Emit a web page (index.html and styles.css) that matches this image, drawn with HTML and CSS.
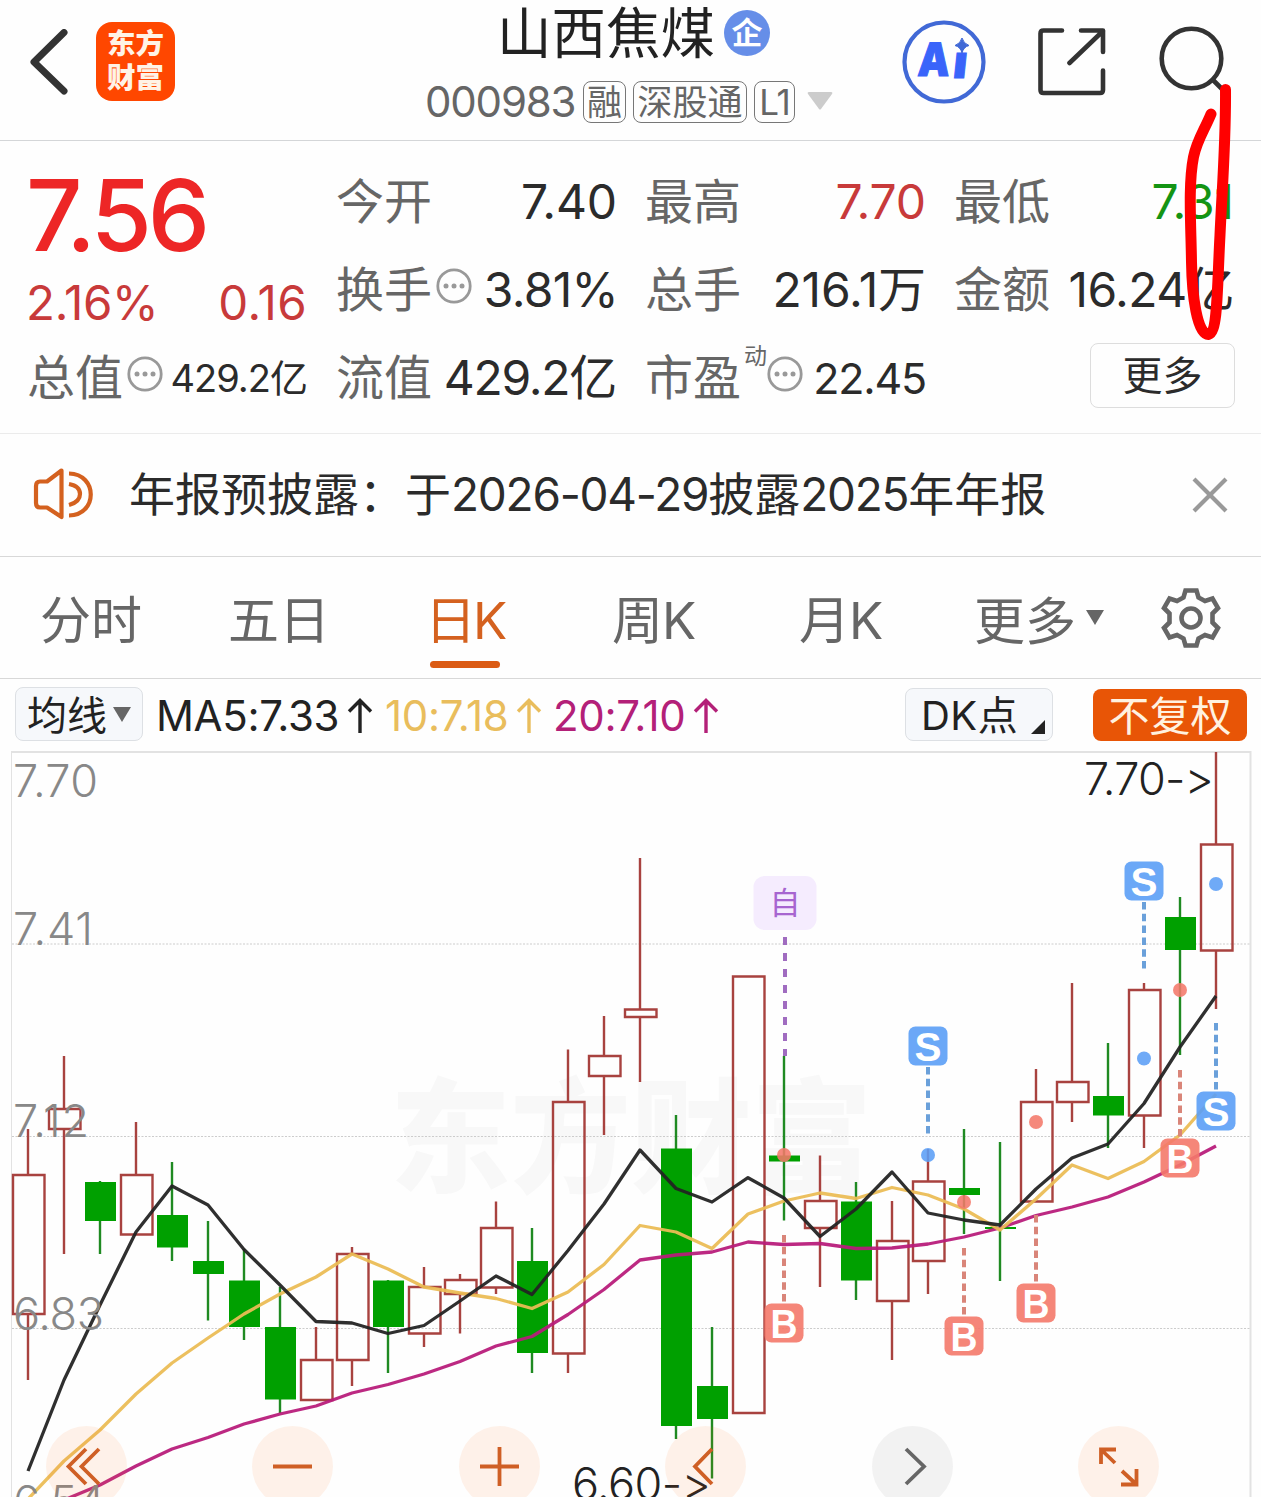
FILE: index.html
```html
<!DOCTYPE html>
<html lang="zh-CN">
<head>
<meta charset="utf-8">
<title>山西焦煤 000983</title>
<link rel="stylesheet" href="styles.css">
</head>
<body>
<div class="page">
  <header class="topbar">
    <div class="topbar-left">
      <svg class="back" width="38" height="66" viewBox="0 0 38 66"><path d="M34 3.500L4 33L34 62" fill="none" stroke="#333" stroke-width="7" stroke-linejoin="round" stroke-linecap="round"/></svg>
      <div class="logo"><span>东方</span><span>财富</span></div>
    </div>
    <div class="topbar-title">
      <div class="name-row"><span class="name">山西焦煤</span><span class="corp">企</span></div>
      <div class="code-row">
        <span class="code">000983</span><span class="tag tag-a">融</span><span class="tag tag-b">深股通</span><span class="tag tag-c">L1</span>
        <svg class="code-caret" width="26" height="18" viewBox="0 0 26 18"><path d="M2 0H24Q26 0 25 2L14 17Q13 18 12 17L1 2Q0 0 2 0Z" fill="#ccc"/></svg>
      </div>
    </div>
    <div class="topbar-actions">
      <svg width="84" height="84" viewBox="0 0 84 84"><circle cx="42" cy="42" r="39.500" fill="none" stroke="#4169d6" stroke-width="4.200"/>
        <g class="ai"><text transform="translate(15 56) skewX(-4)" textLength="32" lengthAdjust="spacingAndGlyphs">A</text><text transform="translate(50 58) skewX(-6)" textLength="14" lengthAdjust="spacingAndGlyphs">ı</text></g>
        <path d="M60 18Q61.500 23.500 67 25.500Q61.500 27 60 33Q58.500 27 53 25.500Q58.500 23.500 60 18Z" fill="#4169d6" stroke="#4169d6"/></svg>
      <svg width="70" height="70" viewBox="1036 27 70 70" fill="none" stroke="#333" stroke-width="4.600" stroke-linecap="round" stroke-linejoin="round"><path d="M1062 30.500H1043.500Q1040.500 30.500 1040.500 33.500V90Q1040.500 93 1043.500 93H1100Q1103 93 1103 90V70.500M1081 30.500H1103V52M1103 31L1069.500 63"/></svg>
      <svg width="72" height="72" viewBox="1157 25 72 72" fill="none" stroke="#333" stroke-width="4.600" stroke-linecap="round"><circle cx="1191.500" cy="58.500" r="29.800"/><path d="M1213 80L1226 93"/></svg>
    </div>
  </header>

  <section class="quote">
    <div class="price-block">
      <div class="price">7.56</div>
      <div class="change"><span class="pct">2.16%</span><span class="diff">0.16</span></div>
    </div>
    <div class="cell"><span class="label">今开</span><span class="val">7.40</span></div>
    <div class="cell"><span class="label">最高</span><span class="val up">7.70</span></div>
    <div class="cell"><span class="label">最低</span><span class="val down">7.31</span></div>
    <div class="cell"><span class="label">换手</span><svg class="info"><use href="#info"/></svg><span class="val rate">3.81%</span></div>
    <div class="cell"><span class="label">总手</span><span class="val">216.1万</span></div>
    <div class="cell"><span class="label">金额</span><span class="val amount">16.24亿</span></div>
    <div class="cell"><span class="label">总值</span><svg class="info"><use href="#info"/></svg><span class="val small">429.2亿</span></div>
    <div class="cell"><span class="label">流值</span><span class="val tight">429.2亿</span></div>
    <div class="cell"><span class="label">市盈</span><sup class="dyn">动</sup><svg class="info"><use href="#info"/></svg><span class="val pe">22.45</span></div>
    <div class="cell more-cell"><button class="more">更多</button></div>
  </section>

  <section class="notice">
    <svg class="horn" width="62" height="54" viewBox="32 467 62 54" fill="none" stroke="#d4611f" stroke-width="4.200" stroke-linejoin="round"><path d="M61.500 470.500L47 481.500H40Q36 481.500 36 486V503Q36 507.500 40 507.500H47L61.500 517Z"/><path d="M69 484Q80 486 80 494T69 505M69 473.500C98 474 98 515 69 515.500"/></svg>
    <span class="notice-text">年报预披露：于<span class="nd">2026-04-29</span>披露<span class="ny">2025</span>年年报</span>
    <svg class="close" width="36" height="36" viewBox="0 0 36 36"><path d="M2 2L34 34M34 2L2 34" stroke="#999" stroke-width="4.200"/></svg>
  </section>

  <nav class="tabs">
    <span class="tab">分时</span><span class="tab">五日</span><span class="tab active">日K</span><span class="tab">周K</span><span class="tab">月K</span><span class="tab tab-more">更多<svg width="18" height="15" viewBox="0 0 18 15"><path d="M0 0H18L9 15Z" fill="#666"/></svg></span>
    <svg class="gear" width="62" height="62" viewBox="-31 -31 62 62" fill="none" stroke="#666" stroke-width="4.600"><path d="M-5.500 -27.500H5.500L7.500 -20.500L14 -17L21.500 -19.500L27 -10L21.500 -4.500V4.500L27 10L21.500 19.500L14 17L7.500 20.500L5.500 27.500H-5.500L-7.500 20.500L-14 17L-21.500 19.500L-27 10L-21.500 4.500V-4.500L-27 -10L-21.500 -19.500L-14 -17L-7.500 -20.500Z"/><circle r="9.500"/></svg>
  </nav>

  <section class="indicators">
    <button class="chip chip-ma">均线<svg width="18" height="15" viewBox="0 0 18 15"><path d="M0 0H18L9 15Z" fill="#666"/></svg></button>
    <span class="ma ma5">MA5:7.33<svg class="arrow"><use href="#up"/></svg></span>
    <span class="ma ma10">10:7.18<svg class="arrow"><use href="#up"/></svg></span>
    <span class="ma ma20">20:7.10<svg class="arrow"><use href="#up"/></svg></span>
    <button class="chip chip-dk">DK点<svg width="14" height="14" viewBox="0 0 14 14"><path d="M14 0V14H0Z" fill="#222"/></svg></button>
    <button class="chip chip-adj">不复权</button>
  </section>

  <svg class="chart" width="1261" height="746" viewBox="0 751 1261 746">
    <text class="watermark" x="390" y="1183" textLength="482" lengthAdjust="spacingAndGlyphs">东方财富</text>
    <path d="M11 752H1250.500V1500" fill="none" stroke="#e2e2e2" stroke-width="2"/>
    <path d="M11.500 752V1500" stroke="#e2e2e2"/>
    <path d="M12 944H1250M12 1136.500H1250M12 1328.500H1250" stroke="#ccc" stroke-dasharray="2 1.500"/>
    <g id="candles"></g>
    <g id="averages"></g>
    <g class="axis">
      <text x="13" y="797" textLength="85">7.70</text>
      <text x="13" y="945" textLength="80">7.41</text>
      <text x="13" y="1137" textLength="76">7.12</text>
      <text x="13" y="1330" textLength="91">6.83</text>
      <text x="13" y="1518" textLength="92">6.54</text>
    </g>
    <g id="marks"></g>
    <g class="extreme">
      <text x="1084" y="795" textLength="130">7.70-&gt;</text>
      <text x="572" y="1500" textLength="139">6.60-&gt;</text>
    </g>
    <g class="controls">
      <circle cx="86.500" cy="1466.500" r="40.500"/><circle cx="292.500" cy="1466.500" r="40.500"/><circle cx="499.500" cy="1466.500" r="40.500"/><circle cx="705.500" cy="1466.500" r="40.500"/><circle class="off" cx="912.500" cy="1466.500" r="40.500"/><circle cx="1118.500" cy="1466.500" r="40.500"/>
      <path d="M86 1449L68.500 1466.500L86 1484M99 1449L81.500 1466.500L99 1484M273 1466.500H312M480 1466.500H519M499.500 1447V1486M712 1449L695 1466.500L712 1484"/>
      <path d="M1116 1449.500H1101V1464M1101.500 1450L1115 1463M1136.500 1469V1484.500H1121M1136 1484L1122 1471"/>
      <path class="off" d="M906 1449L924 1466.500L906 1484"/>
    </g>
  </svg>

  <svg class="scribble" width="60" height="270" viewBox="1180 80 60 270"><path d="M1225.500 89.500C1226 140 1222 190 1220 235C1217 290 1218 332 1208.500 334.500C1197 335 1192 295 1191.500 262C1191 225 1188 185 1193.500 157C1197 140 1204 131 1211 114" fill="none" stroke="#f00" stroke-width="11" stroke-linecap="round" stroke-linejoin="round"/></svg>

  <svg class="defs" width="0" height="0">
    <symbol id="info" viewBox="0 0 36 36"><circle cx="18" cy="18" r="16.200" fill="none" stroke="#999" stroke-width="2.800"/><g fill="#999"><circle cx="10" cy="18" r="2.500"/><circle cx="18" cy="18" r="2.500"/><circle cx="26" cy="18" r="2.500"/></g></symbol>
    <symbol id="up" viewBox="0 0 26 36"><path d="M13 35V2.500M2 13.500L13 2.500L24 13.500" fill="none" stroke="currentColor" stroke-width="3.400"/></symbol>
  </svg>
</div>
<script src="chart.js"></script>
</body>
</html>
```
FILE: styles.css
```css
* { box-sizing: border-box; }
body { margin: 0; background: #fefefe; }
.page {
  position: relative;
  width: 1261px;
  height: 1497px;
  overflow: hidden;
  background: #fefefe;
  color: #2b2b2b;
  font-family: Inter, "Noto Sans CJK SC", sans-serif;
  font-weight: 385;
  font-feature-settings: "calt" 0;
}
svg { display: block; flex: none; }
.defs { position: absolute; }
button { font: inherit; color: inherit; padding: 0; margin: 0; }
span { white-space: nowrap; }

.topbar { display: grid; grid-template-columns: 425px 408px 1fr; height: 141px; border-bottom: 1px solid #d4d6d8; }
.topbar-left { display: flex; padding: 22px 0 0 30px; }
.back { margin-top: 7px; }
.logo { width: 79px; height: 79px; margin-left: 28px; padding: 5px 0 0; border-radius: 16px; background: #ff4700; color: #fff3e6; display: flex; flex-direction: column; align-items: center; font-size: 28.500px; line-height: 34px; font-weight: 900; }
.name-row { display: flex; align-items: center; height: 66px; padding-left: 72px; }
.name { font-size: 54.500px; line-height: 68px; color: #222; }
.corp { width: 46px; height: 46px; margin-left: 9px; border-radius: 50%; background: #668ee8; color: #fff; font-size: 31px; line-height: 45px; text-align: center; font-weight: 700; }
.code-row { display: flex; align-items: center; height: 42px; margin-top: 15px; color: #666; }
.code { width: 158px; font-size: 42px; letter-spacing: -1.200px; margin-top: -2px; }
.tag { height: 42px; border: 1.500px solid #777; border-radius: 8px; font-size: 35px; line-height: 40px; text-align: center; margin-right: 7px; }
.tag-a { width: 43px; }
.tag-b { width: 114px; }
.tag-c { width: 41px; letter-spacing: -1px; }
.code-caret { margin: -3px 0 0 5px; }
.topbar-actions { display: flex; align-items: flex-start; padding: 20px 0 0 69px; }
.topbar-actions svg:nth-child(2) { margin: 7px 0 0 50px; }
.topbar-actions svg:nth-child(3) { margin: 5px 0 0 51px; }
.ai { font-size: 46px; font-weight: 900; fill: #3964fa; stroke: #3964fa; stroke-width: 1px; }

.quote { display: grid; grid-template-columns: 279px 279px 279px 278px; grid-template-rows: 88px 88px 88px; column-gap: 30px; height: 293px; padding: 17px 0 0 28px; border-bottom: 1px solid #ebebeb; }
.price-block { grid-row: span 2; color: #c83a3a; }
.price { color: #ed2626; font-size: 99px; line-height: 114px; font-weight: 530; letter-spacing: -4.200px; margin-left: -2px; }
.change { display: flex; justify-content: space-between; font-size: 47.500px; line-height: 62px; letter-spacing: -.300px; margin-left: -2px; }
.diff { letter-spacing: .400px; }
.cell { display: flex; align-items: center; font-size: 48px; line-height: 88px; }
.label { color: #666; margin-left: -1px; }
.val { margin-left: auto; letter-spacing: -.100px; margin-right: -1px; }
.up { color: #c83a3a; }
.down { color: #149414; }
.rate { letter-spacing: -.700px; margin-right: -2px; }
.amount { letter-spacing: -.600px; }
.tight { letter-spacing: -1.300px; margin-right: 0; }
.small { font-size: 38px; letter-spacing: -1px; margin-right: 0; }
.pe { font-size: 43px; letter-spacing: -1.200px; margin-right: -1px; }
.info { width: 36px; height: 36px; margin: -8px 0 0 4px; }
.dyn { font-size: 23px; line-height: 24px; color: #666; margin: -44px -4px 0 3px; }
.more-cell { justify-content: flex-end; }
.more { width: 145px; height: 65px; margin: -5px -2px 0 0; border: 1.500px solid #ddd; border-radius: 8px; background: transparent; font-size: 40px; line-height: 60px; }

.notice { display: flex; align-items: center; height: 123px; padding: 0 33px 0 32px; border-bottom: 1px solid #d8d8d8; }
.horn { margin-top: -3px; }
.notice-text { margin-left: 35px; font-size: 46px; line-height: 60px; margin-top: -2px; }
.nd, .ny { letter-spacing: -1.250px; }
.close { margin-left: auto; }

.tabs { display: flex; align-items: center; height: 122px; padding-left: 40px; border-bottom: 1px solid #d8d8d8; color: #666; font-size: 51px; }
.tab { width: 188px; height: 121px; line-height: 127px; }
.tab:nth-child(2) { width: 202px; }
.tab:nth-child(3) { width: 182px; }
.tab:nth-child(4) { width: 187px; letter-spacing: -1px; }
.tab:nth-child(5) { width: 176px; letter-spacing: -1px; }
.active { color: #d4611f; display: flex; flex-direction: column; letter-spacing: -3px; text-indent: -5px; }
.active::after { content: ""; width: 70px; height: 7px; margin-top: -23px; border-radius: 4px; background: #db5b14; }
.tabs .tab-more { display: flex; align-items: center; width: 185px; padding-top: 7px; margin-left: -1px; margin-right: 1px; }
.tab-more svg { margin: -8px 0 0 10px; }

.indicators { display: flex; height: 72px; padding: 8px 0 0 15px; font-size: 42px; line-height: 58px; }
.ma { display: flex; align-items: flex-start; letter-spacing: -.350px; }
.ma5 { width: 229px; margin-left: 13px; color: #222; }
.ma10 { width: 168px; color: #e9bd5c; }
.ma20 { width: 352px; color: #b32078; }
.arrow { width: 26px; height: 36px; margin: 11px 0 0 8px; }
.chip { display: flex; align-items: center; height: 54px; border: 1.500px solid #dde0e4; border-radius: 8px; background: #f6f8fb; font-size: 40px; line-height: 54px; color: #222; }
.chip-ma { width: 128px; padding: 3px 0 0 11px; }
.chip-ma svg { margin: -3px 0 0 6px; }
.chip-dk { width: 148px; margin-top: 1px; height: 53px; padding: 2px 0 0 15px; letter-spacing: .500px; }
.chip-dk svg { margin: 22px 0 0 13px; }
.chip-adj { width: 154px; height: 52px; margin: 2px 0 0 40px; padding-top: 1px; border: 0; background: #e85506; color: #fff2e0; justify-content: center; font-size: 41px; }

.chart text { font-family: Inter, "Noto Sans CJK SC", sans-serif; }
.watermark { font-size: 124px; font-weight: 900; fill: #f8f8f8; }
.axis { font-size: 45px; font-weight: 360; fill: #888; }
.extreme { font-size: 45px; font-weight: 360; fill: #222; }
.rise { fill: none; stroke: #a8423f; stroke-width: 2.400px; }
.fall { fill: #00a000; stroke: none; }
.fall-wick { stroke: #1f8a22; stroke-width: 2.400px; }
.avg { fill: none; stroke-width: 3.300px; stroke-linejoin: round; opacity: .94; }
.chart .badge { font-family: "Liberation Sans", sans-serif; font-weight: 700; font-size: 41px; fill: #fff; text-anchor: middle; }
.self { font-size: 31px; fill: #a765d0; text-anchor: middle; }
.controls circle { fill: #ff6a1a; opacity: .09; }
.controls circle.off { fill: #777; }
.controls path { fill: none; stroke: #cf5f25; stroke-width: 3.800px; }
.controls path.off { stroke: #666; }
.scribble { position: absolute; left: 1180px; top: 80px; }
```
FILE: chart.js
```js
// Daily candles: [direction, high, body top, body bottom, low] on the plot's vertical scale
const candles = [
  ['r',1129,1175,1314,1380],['r',1056,1109,1129,1254],['g',1181,1182,1221,1254],['r',1122,1175,1234.5,1234],
  ['g',1162,1215,1247.5,1261],['g',1221,1261,1274,1320.5],['g',1249,1280.5,1327,1340],['g',1287,1327,1399.5,1413],
  ['r',1327,1360,1400,1400],['r',1247,1254,1360,1386],['g',1280,1280.5,1327,1373],['r',1267,1287,1333.5,1347],
  ['r',1274,1280,1294,1333.5],['r',1201.5,1228,1287.5,1294],['g',1228,1261,1353,1373],['r',1049.5,1102,1353.5,1373],
  ['r',1016,1056,1076,1135],['r',858,1009.5,1017,1082],['g',1115,1148.5,1426,1439],['g',1327,1386,1419,1478.5],
  ['r',977,976.5,1413,1413],['g',1056,1155.5,1161.5,1220.5],['r',1155.5,1201,1228,1287],['g',1182,1201.5,1280.5,1300],
  ['r',1201,1241,1301,1360],['r',1149,1181.5,1261,1294],['g',1129,1188,1195,1234],['g',1142,1227,1229,1281],
  ['r',1069,1102,1201.5,1201],['r',983,1082,1102,1122],['g',1043,1096,1115.5,1148],['r',983,990,1115.5,1148],
  ['g',897,917,950,1055],['r',752,844.5,950.5,1009]
];
document.getElementById('candles').innerHTML = candles.map(([d, h, t, b, l], i) => {
  const x = 28 + 36 * i;
  return d === 'r'
    ? `<path class="rise" d="M${x} ${h}V${t}M${x} ${b}V${l}M${x - 15} ${t}h31.500V${b}h-31.500Z"/>`
    : `<path class="fall-wick" d="M${x} ${h}V${l}"/><rect class="fall" x="${x - 15}" y="${t}" width="31" height="${b - t}"/>`;
}).join('');

const averages = {
  '#b81c7a': [1516,1500,1485,1466,1449,1437.5,1424,1414,1406,1393,1384.5,1374,1361.5,1346,1336.5,1314.5,1289.5,1260,1255,1252,1242,1244.500,1243.5,1248.5,1248,1244,1237,1228,1215.500,1207,1197,1182,1165,1146],
  '#ebbc55': [1499,1461,1430,1394,1363,1338,1314,1294,1277,1254,1269,1287,1293,1298.5,1308.5,1292,1264.5,1225.5,1232,1248.5,1214,1201,1193,1198.5,1187.5,1195,1209,1230,1199,1165,1178.5,1161.5,1135,1094],
  '#222': [1471,1380,1305,1232,1186,1205,1249.5,1285,1321.5,1323,1333.5,1325.5,1301,1276,1294.5,1250.5,1204,1150,1188.5,1202,1177.700,1198,1236.5,1209,1172,1213,1220,1225,1189,1158,1144,1103.500,1047,996]
};
document.getElementById('averages').innerHTML = Object.entries(averages).map(([color, ys]) =>
  `<polyline class="avg" stroke="${color}" points="${ys.map((y, i) => `${28 + 36 * i},${y}`).join(' ')}"/>`).join('');

const BLUE = '#5b9ef6', RED = '#f4796a';
const dots = [[784,1155,RED],[964,1202,RED],[1036,1122,RED],[1180,990,RED],[928,1155,BLUE],[1144,1058.5,BLUE],[1216,884,BLUE]];
const trades = [['S',1144,881,902],['S',928,1046,1067],['S',1216,1111,1023],['B',784,1323,1235],['B',964,1336,1248],['B',1036,1303,1215],['B',1180,1158,1070]];
document.getElementById('marks').innerHTML =
  dots.map(([x, y, c]) => `<circle cx="${x}" cy="${y}" r="7" fill="${c}" opacity=".88"/>`).join('') +
  trades.map(([t, x, y, from]) => {
    const c = t === 'S' ? BLUE : RED;
    return `<path d="M${x} ${from}v67" stroke="${t === 'S' ? '#6aa0da' : '#d98579'}" stroke-width="4" stroke-dasharray="7.500 4.300"/>` +
      `<rect x="${x - 19.5}" y="${y - 19.5}" width="39" height="39" rx="7" fill="${c}" opacity=".9"/>` +
      `<text class="badge" x="${x}" y="${y + 15}" textLength="27" lengthAdjust="spacingAndGlyphs">${t}</text>`;
  }).join('') +
  '<rect x="753.500" y="876" width="63" height="54" rx="11" fill="#f5ecfe"/><text class="self" x="785" y="914">自</text>' +
  '<path d="M785 937V1056" stroke="#a06cc0" stroke-width="4" stroke-dasharray="8 8"/>';
```
